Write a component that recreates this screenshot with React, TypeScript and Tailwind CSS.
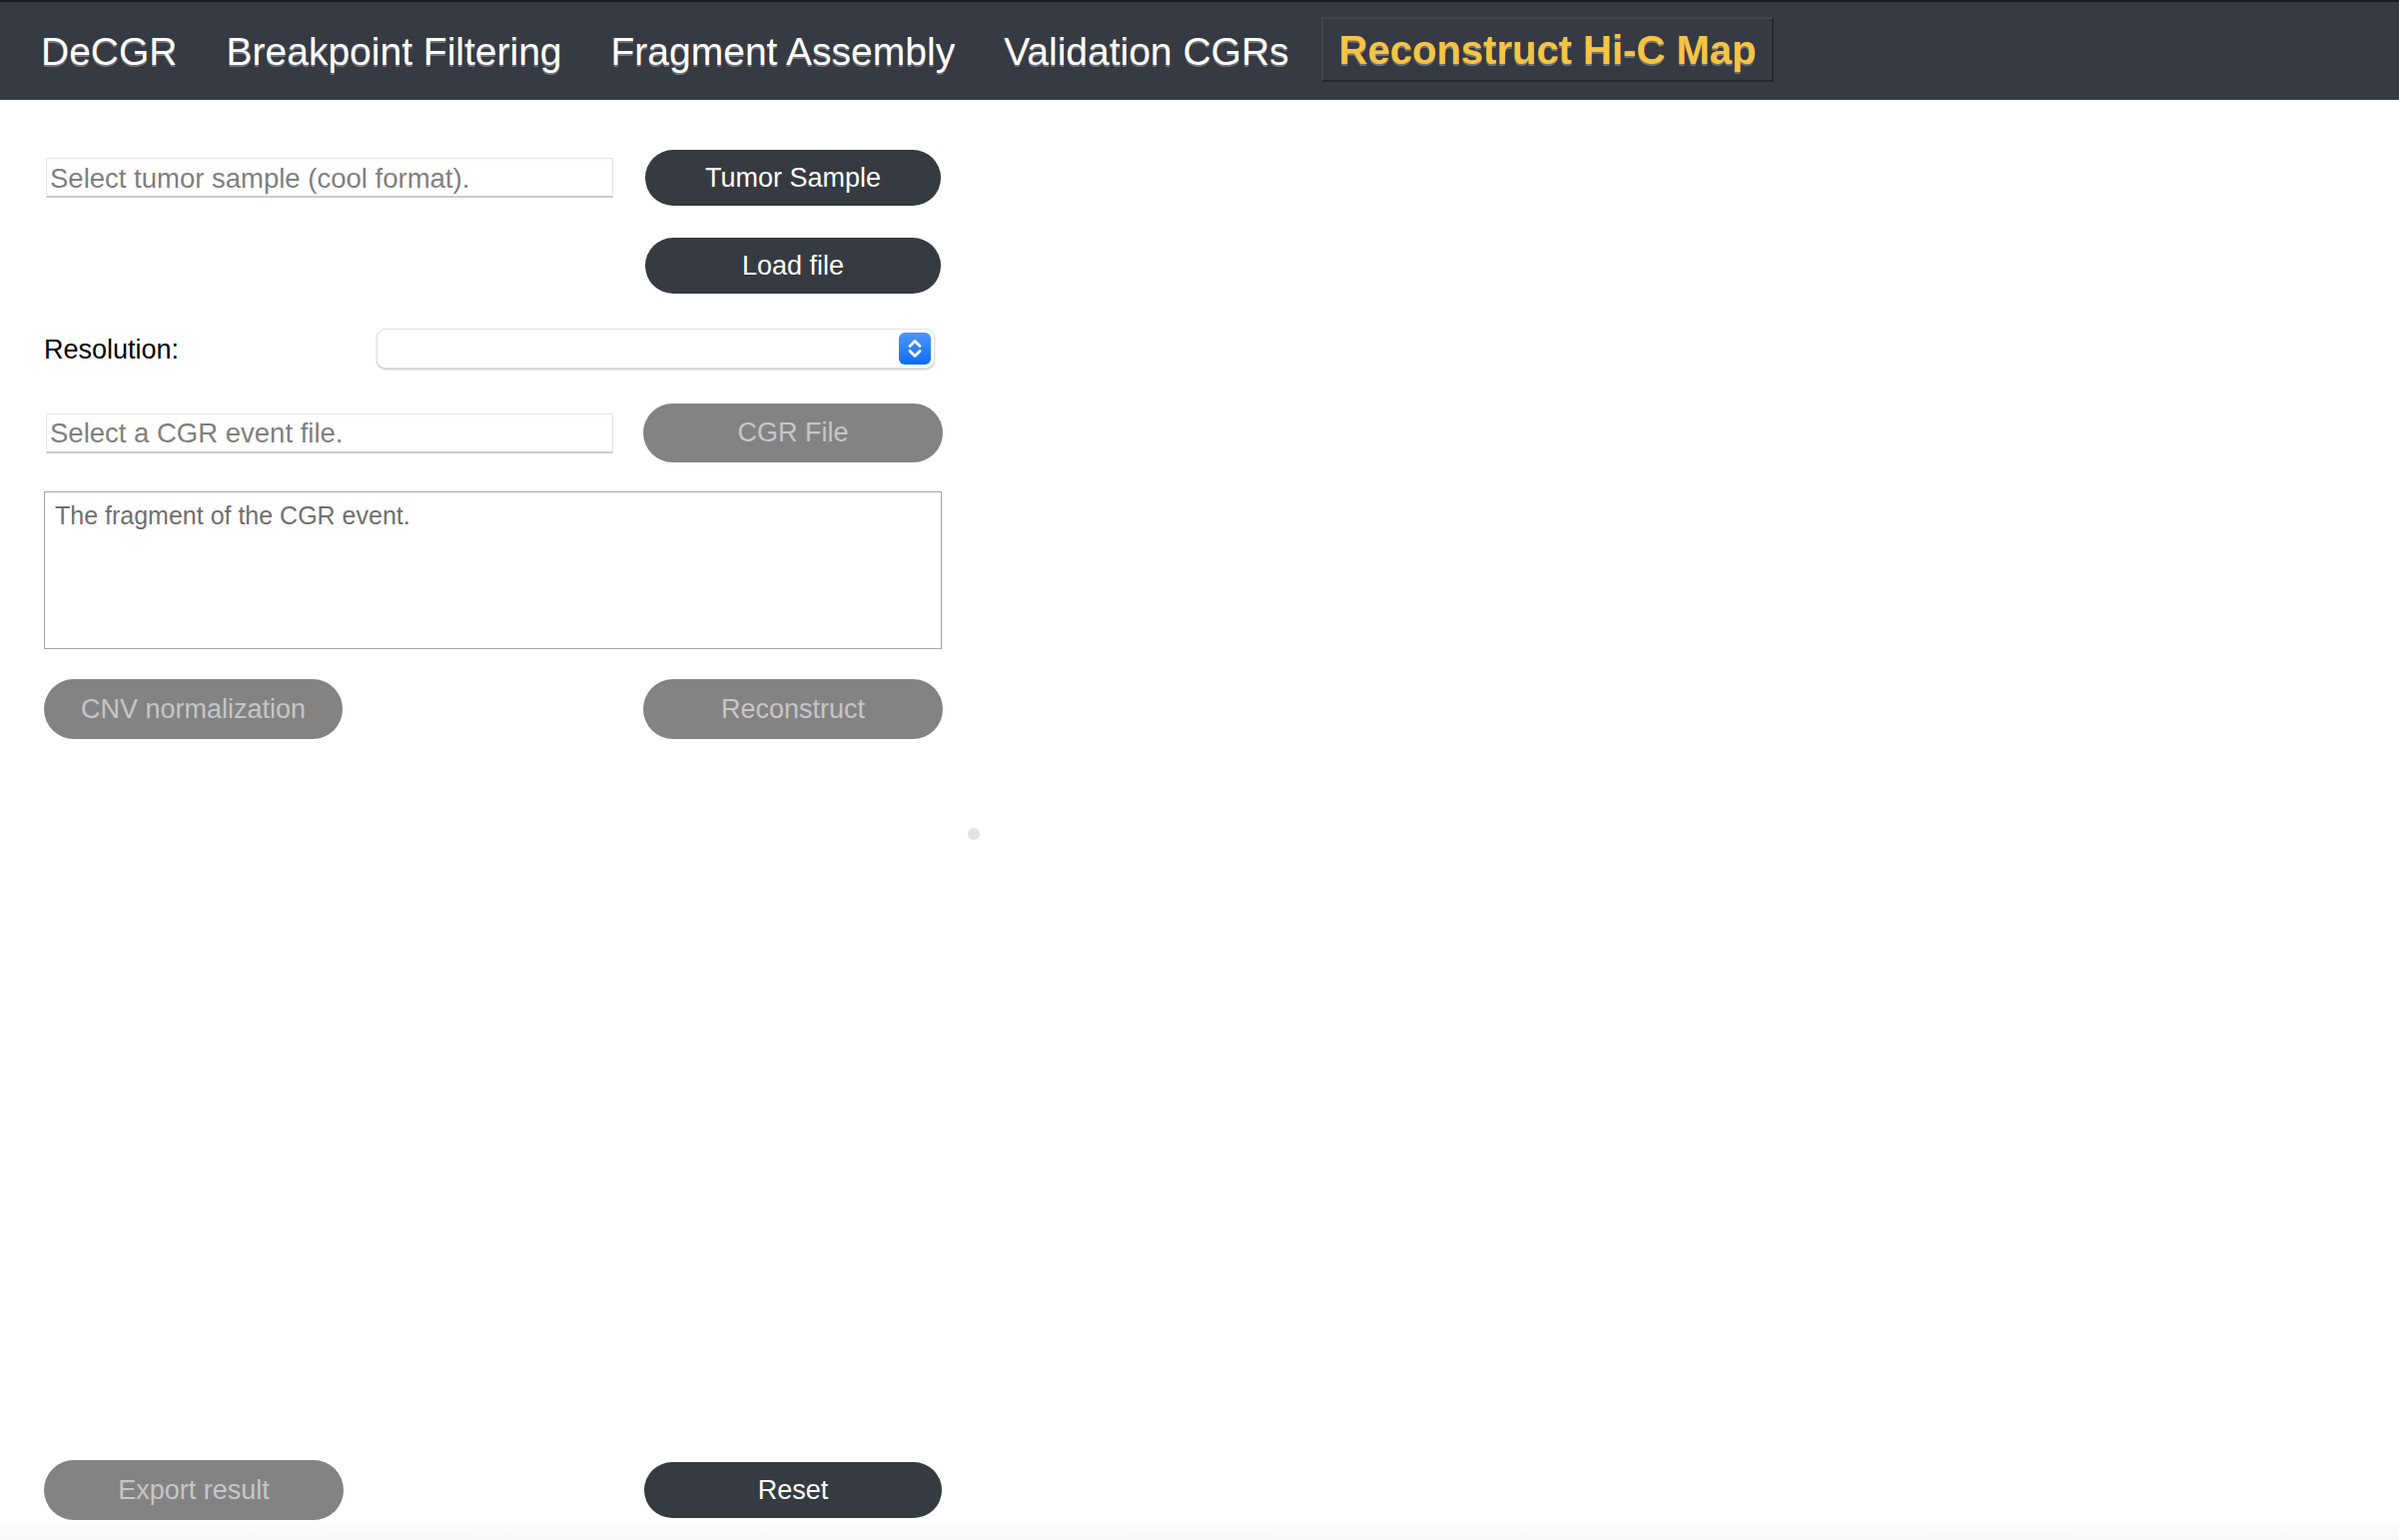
import React from "react";

const tabs = ["DeCGR", "Breakpoint Filtering", "Fragment Assembly", "Validation CGRs"];

export default function App() {
  return (
    <div className="h-[1542px] w-full flex flex-col bg-white overflow-hidden [font-family:'Liberation_Sans',Arial,sans-serif]">
      {/* Header */}
      <div className="h-[100px] shrink-0 bg-[#363a42] border-t-2 border-t-[#1d1f25] flex items-center pl-[24px] gap-[15px]">
        {tabs.map((t) => (
          <div
            key={t}
            className="h-[65px] px-[17px] flex items-center text-[39px] text-white [text-shadow:0_2px_0_rgba(120,120,125,0.9)] leading-none"
          >
            {t}
          </div>
        ))}
        <div className="h-[65px] mt-[-3px] px-[16px] flex items-center text-[40px] font-bold text-[#f5c443] [text-shadow:0_2px_0_rgba(120,120,125,0.9)] leading-none border-2 border-t-[#41454d] border-l-[#41454d] border-b-[#24272c] border-r-[#24272c] bg-[#363a42]">
          Reconstruct Hi-C Map
        </div>
      </div>

      {/* Main */}
      <div className="flex-1 flex flex-col pl-[44px] w-[944px] relative">
        {/* Row 1 */}
        <div className="mt-[50px] h-[56px] flex items-center">
          <div className="ml-[2px] w-[568px] h-[40px] border border-[#e6e6e6] border-b-2 border-b-[#cbcbcb] flex items-center pl-[3px] pt-[2px] text-[27.5px] text-[#7f7f7f] leading-none">
            Select tumor sample (cool format).
          </div>
          <button className="ml-[32px] w-[296px] h-[56px] rounded-full bg-[#363a41] text-white text-[27px] leading-none">
            Tumor Sample
          </button>
        </div>

        {/* Row 2 */}
        <div className="mt-[32px] h-[56px] flex items-center">
          <button className="ml-[602px] w-[296px] h-[56px] rounded-full bg-[#363a41] text-white text-[27px] leading-none">
            Load file
          </button>
        </div>

        {/* Row 3 */}
        <div className="mt-[35px] h-[40px] flex items-center">
          <div className="w-[333px] pt-[3px] text-[27px] text-black leading-none">Resolution:</div>
          <div className="w-[559px] h-[40px] rounded-[9px] bg-white border border-[#e2e2e2] shadow-[0_1px_2px_rgba(0,0,0,0.25)] flex items-center justify-end pr-[3px]">
            <div className="w-[32px] h-[32px] rounded-[6px] bg-gradient-to-b from-[#4a97fa] to-[#0a6af4] flex items-center justify-center">
              <svg width="32" height="32" viewBox="0 0 32 32" fill="none">
                <path d="M11 13.5 L16 8.5 L21 13.5" stroke="white" strokeWidth="2.8" strokeLinecap="round" strokeLinejoin="round" />
                <path d="M11 18.5 L16 23.5 L21 18.5" stroke="white" strokeWidth="2.8" strokeLinecap="round" strokeLinejoin="round" />
              </svg>
            </div>
          </div>
        </div>

        {/* Row 4 */}
        <div className="mt-[35px] h-[59px] flex items-center">
          <div className="ml-[2px] w-[568px] h-[40px] border border-[#e6e6e6] border-b-2 border-b-[#cbcbcb] flex items-center pl-[3px] pt-[2px] text-[27.5px] text-[#7f7f7f] leading-none">
            Select a CGR event file.
          </div>
          <button className="ml-[30px] w-[300px] h-[59px] rounded-full bg-[#838383] text-[#c6c6c6] text-[27px] leading-none">
            CGR File
          </button>
        </div>

        {/* Textarea */}
        <div className="mt-[29px] w-[899px] h-[158px] border-[1.5px] border-[#a3a3a3] pl-[10px] pt-[7px] text-[25px] text-[#6f6f6f] leading-[1.3]">
          The fragment of the CGR event.
        </div>

        {/* Buttons row */}
        <div className="mt-[30px] h-[60px] flex items-center justify-between w-[900px]">
          <button className="w-[299px] h-[60px] rounded-full bg-[#838383] text-[#c6c6c6] text-[27px] leading-none">
            CNV normalization
          </button>
          <button className="w-[300px] h-[60px] rounded-full bg-[#838383] text-[#c6c6c6] text-[27px] leading-none">
            Reconstruct
          </button>
        </div>

        {/* Spinner dot */}
        <div className="absolute left-[969px] top-[729px] w-[12px] h-[12px] rounded-full bg-[#e2e2e2]" />

        <div className="flex-1" />

        {/* Bottom buttons */}
        <div className="h-[60px] flex items-center justify-between w-[900px]">
          <button className="w-[300px] h-[60px] rounded-full bg-[#838383] text-[#c6c6c6] text-[27px] leading-none">
            Export result
          </button>
          <button className="mr-[1px] w-[298px] h-[56px] rounded-full bg-[#363a41] text-white text-[27px] leading-none">
            Reset
          </button>
        </div>
      </div>

      {/* Bottom strip */}
      <div className="h-[20px] shrink-0 w-full bg-gradient-to-b from-[#fefefe] to-[#f7f7f7]" />
    </div>
  );
}
